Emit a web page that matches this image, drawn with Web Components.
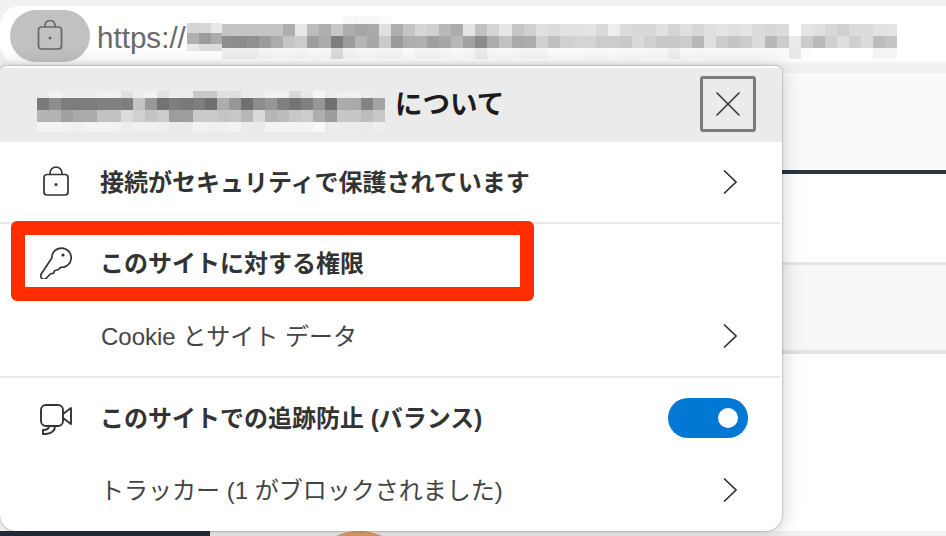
<!DOCTYPE html>
<html lang="ja">
<head>
<meta charset="utf-8">
<title>サイト情報</title>
<style>
  html, body { margin: 0; padding: 0; background: #fff; }
  body { width: 946px; height: 536px; overflow: hidden; font-family: "Liberation Sans", "Noto Sans CJK JP", sans-serif; }
</style>
</head>
<body>
<browser-frame>
  <address-bar></address-bar>
  <page-backdrop></page-backdrop>
  <info-panel>
    <panel-header slot="header">について</panel-header>

    <info-row strong style="--row-h: 80px">
      <svg slot="icon" width="32" height="32" viewBox="0 0 32 32" fill="none" stroke="#333" stroke-width="1.7">
        <rect x="4" y="8.5" width="24" height="20.5" rx="3"/>
        <path d="M10 8.5V7a6 6 0 0 1 12 0v1.5"/>
        <circle cx="16" cy="18.5" r="1.5" fill="#333" stroke="none"/>
      </svg>
      接続がセキュリティで保護されています
      <row-chevron slot="end"></row-chevron>
    </info-row>
    <row-divider></row-divider>

    <info-row strong style="--row-h: 78px">
      <svg slot="icon" width="32" height="32" viewBox="0 -1 32 32" fill="none" stroke="#333" stroke-width="1.7" stroke-linejoin="round">
        <path d="M11.8 10A9.7 9.7 0 1 1 20.5 19.4L18.5 21.5L14.5 22.7L13.5 25.3L11 25.5L5.5 30.8Q3.5 32 1.8 30.4Q0 28.6 1.2 26Z"/>
        <circle cx="23" cy="7" r="1.6" fill="#333" stroke="none"/>
      </svg>
      このサイトに対する権限
    </info-row>
    <info-row style="--row-h: 68px; --row-pad: 6px; --text-indent: 1px">
      Cookie とサイト データ
      <row-chevron slot="end"></row-chevron>
    </info-row>
    <row-divider></row-divider>

    <info-row strong style="--row-h: 80px">
      <svg slot="icon" width="32" height="36" viewBox="0 0 32 36" fill="none" stroke="#333" stroke-width="1.9" stroke-linejoin="round">
        <rect x="1" y="5" width="22" height="21" rx="5"/>
        <path d="M23 14L31 8V24L23 18"/>
        <path d="M9 26Q9 30 3 30V34H6Q15 33 15 26"/>
      </svg>
      このサイトでの追跡防止 (バランス)
      <toggle-switch slot="end"></toggle-switch>
    </info-row>
    <info-row style="--row-h: 64px">
      トラッカー (1 がブロックされました)
      <row-chevron slot="end"></row-chevron>
    </info-row>

    <red-outline slot="overlay"></red-outline>
  </info-panel>
</browser-frame>

<script>
// small helper: every element gets an open shadow root from a html string
class ShadowElement extends HTMLElement {
  constructor(html) {
    super();
    this.attachShadow({ mode: "open" }).innerHTML = html;
  }
}

class BrowserFrame extends ShadowElement {
  constructor() {
    super(`
      <style>
        :host { display: flex; flex-direction: column; position: relative; width: 946px; height: 536px; overflow: hidden; background: #fff; }
      </style>
      <slot></slot>
    `);
  }
}

// blurred-out pixels, rows of two digit grey values
class MosaicStrip extends HTMLElement {
  constructor() {
    super();
    this.attachShadow({ mode: "open" });
  }
  connectedCallback() {
    const cell = this.getAttribute("cell");
    const heights = this.getAttribute("heights").split(" ");
    const rows = this.getAttribute("rows").trim().split("/").map((r) => r.trim().split(/\s+/));
    const cols = Math.max(...rows.map((r) => r.length));
    let cells = "";
    rows.forEach((row) => {
      for (let i = 0; i < cols; i++) {
        const g = row[i];
        cells += g && g !== "--" ? `<i style="background:#${g}${g}${g}"></i>` : "<i></i>";
      }
    });
    this.shadowRoot.innerHTML = `
      <style>
        :host { display: grid; flex: none; filter: blur(.5px);
          grid-template-columns: repeat(${cols}, ${cell}px);
          grid-template-rows: ${heights.map((h) => h + "px").join(" ")}; }
        i { display: block; }
      </style>
      ${cells}
    `;
  }
}

class AddressBar extends ShadowElement {
  constructor() {
    super(`
      <style>
        :host { display: block; flex: none; height: 66px; background: #f1f1f1; }
        .bar { display: flex; height: 58px; margin-top: 6px; background: linear-gradient(#fff 92%, #f2f2f2); border-radius: 20px 0 0 20px; }
        .lock { flex: none; display: flex; align-items: center; justify-content: center; width: 80px; height: 52px; margin: 4px 0 0 10px; background: #c1c1c1; border-radius: 26px; }
        .scheme { flex: none; width: 90px; margin-left: 7px; line-height: 63px; font-size: 29.6px; color: #6a6a6a; white-space: nowrap; }
        .first { margin-top: 17px; }
        .rest { margin-top: 10px; }
      </style>
      <div class="bar">
        <div class="lock">
          <svg width="26" height="32" viewBox="0 0 26 32" fill="none" stroke="#666" stroke-width="1.7">
            <rect x="1.5" y="7" width="23" height="22" rx="3"/>
            <path d="M8 7V5.5a5 5 0 0 1 10 0V7"/>
            <circle cx="13" cy="18" r="1.5" fill="#666" stroke="none"/>
          </svg>
        </div>
        <div class="scheme">https://</div>
        <mosaic-strip class="first" cell="11.8" heights="10 11 7" rows="
          d4 d8 e8 / b0 9c ac / e8 dc dc"></mosaic-strip>
        <mosaic-strip class="rest" cell="12.05" heights="8 12 12 11" rows="
          -- -- -- -- -- -- -- -- -- -- f8 f6 f6 fb /
          c4 c4 c4 c4 c4 ae e8 bc ae c8 ac a6 aa e0 ae c4 d6 d0 b8 ac e4 c2 d4 e6 c6 d0 e0 dc e2 e2 e4 da ee dc d8 d8 e0 d4 e0 d8 e0 e4 e0 e4 dc d8 dc ff e4 e0 d8 d0 dc dc e2 e4 /
          8e 8c 90 9c ac c4 cc 9e ab 7e 9c b6 a8 ca 9a ae b0 a0 a8 b8 a2 8c ac c2 aa ac d0 c0 d0 d4 d4 cc cc c8 da d0 c8 c8 cc b8 e0 cc c4 cc dc b8 cc ea cc ba d0 de d0 dc bc c4 /
          f0 f0 f0 f6 f8 f8 f6 fa f8 dc f4 f8 f8 f6 f6 fc f6 f6 f8 fc f8 ec f8 fa f8 f6 f6 fc fc fc fa fa fc fa fa f8 f8 f0 fa f8 fa fa fa fa fa fa fa e8 fc ff ff ff ff ff f4 f4"></mosaic-strip>
      </div>
    `);
  }
}

// page content that shows behind the popup
class PageBackdrop extends ShadowElement {
  constructor() {
    super(`
      <style>
        :host { display: flex; flex-direction: column; flex: 1; background: #fff; }
        .top { height: 7px; background: #f0f0f0; }
        .soft { height: 97px; background: #fafafa; }
        .rule { height: 4px; background: #2b3441; }
        .blank { height: 88px; }
        .line { height: 3px; background: #e6e6e6; }
        .band { height: 85px; background: #f6f7f7; }
        .line2 { height: 4px; background: #e2e2e2; }
        .rest { flex: 1; }
        .foot { display: flex; height: 5px; background: #f2f2f2; overflow: hidden; }
        .dark { width: 210px; background: #232f3e; }
        .face { width: 62px; height: 30px; margin-left: 118px; background: #e0a070; border-radius: 50%; }
      </style>
      <div class="top"></div>
      <div class="soft"></div>
      <div class="rule"></div>
      <div class="blank"></div>
      <div class="line"></div>
      <div class="band"></div>
      <div class="line2"></div>
      <div class="rest"></div>
      <div class="foot"><div class="dark"></div><div class="face"></div></div>
    `);
  }
}

class InfoPanel extends ShadowElement {
  constructor() {
    super(`
      <style>
        :host { display: block; position: absolute; left: 0; top: 66px; width: 782px; height: 465px; box-sizing: border-box; padding-top: 2px; background: #fff; border-radius: 6px 6px 16px 16px; box-shadow: 0 0 2px rgba(0,0,0,.45), 0 2px 22px rgba(0,0,0,.2); overflow: hidden; }
      </style>
      <slot name="header"></slot>
      <slot></slot>
      <slot name="overlay"></slot>
    `);
  }
}

class PanelHeader extends ShadowElement {
  constructor() {
    super(`
      <style>
        :host { display: flex; height: 74px; background: #ebebeb; }
        mosaic-strip { margin: 23px 0 0 37px; align-self: flex-start; }
        .title { margin-left: 10px; line-height: 73px; font-size: 27.5px; font-weight: 700; color: #1c1c1c; white-space: nowrap; }
        .close { display: flex; align-items: center; justify-content: center; box-sizing: border-box; width: 56px; height: 56px; margin: 8px 26px 0 auto; border: 3px solid #7a7a7a; border-radius: 3px; }
      </style>
      <mosaic-strip cell="12" heights="7 12 12 10" rows="
        eb f2 ed ed ed ef f1 e0 ec f2 e2 ec ec c8 c8 e0 de ea ea f0 f0 d8 e8 f6 ec f0 f0 ec eb /
        7a 8e 7c 7c 7c 80 80 7e c4 98 74 7e 78 7e 70 ae 98 70 8c 96 80 74 80 96 70 ac aa 84 a4 /
        b4 b4 a0 aa aa c2 c2 dc d0 c4 cc 9c 9e ca ca c4 c8 b8 da b6 bc c8 cc ae 9c c6 c6 bc c8 /
        f4 f4 f2 f0 f4 f4 f2 ee f0 f0 ee ea ea f2 f0 f0 f4 ec ea f4 f4 f4 f4 f8 ec ec ec ea ee"></mosaic-strip>
      <div class="title"><slot></slot></div>
      <div class="close">
        <svg width="24" height="24" viewBox="0 0 24 24" stroke="#333" stroke-width="1.5"><path d="M0.5 0.5L23.5 23.5M23.5 0.5L0.5 23.5"/></svg>
      </div>
    `);
  }
}

class InfoRow extends ShadowElement {
  constructor() {
    super(`
      <style>
        :host { display: flex; align-items: center; height: var(--row-h, 76px); padding-bottom: var(--row-pad, 0); font-size: 24px; color: #444; white-space: nowrap; }
        :host([strong]) { font-weight: 700; color: #333; }
        .icon { flex: none; display: flex; align-items: center; width: 60px; padding-left: 40px; }
        .text { flex: 1; padding: 0 0 4px var(--text-indent, 0); }
        .end { flex: none; display: flex; justify-content: flex-end; padding-right: 34px; }
      </style>
      <div class="icon"><slot name="icon"></slot></div>
      <div class="text"><slot></slot></div>
      <div class="end"><slot name="end"></slot></div>
    `);
  }
}

class RowDivider extends ShadowElement {
  constructor() {
    super(`<style>:host { display: block; width: 780px; height: 2px; background: #e8e8e8; }</style>`);
  }
}

class RowChevron extends ShadowElement {
  constructor() {
    super(`
      <style>:host { display: block; margin-right: 11px; height: 24px; } svg { display: block; }</style>
      <svg width="14" height="24" viewBox="0 0 14 24" fill="none" stroke="#333" stroke-width="1.6"><path d="M1 0.5L13 12L1 23.5"/></svg>
    `);
  }
}

class ToggleSwitch extends ShadowElement {
  constructor() {
    super(`
      <style>
        :host { display: flex; align-items: center; justify-content: flex-end; box-sizing: border-box; width: 80px; height: 40px; padding-right: 10px; background: #0078d4; border-radius: 20px; }
        .knob { width: 20px; height: 20px; background: #fff; border-radius: 50%; }
      </style>
      <div class="knob"></div>
    `);
  }
}

// annotation drawn over the screenshot
class RedOutline extends ShadowElement {
  constructor() {
    super(`<style>:host { display: block; position: absolute; left: 11px; top: 155px; width: 523px; height: 80px; box-sizing: border-box; border: 14px solid #ff2d00; border-radius: 6px; }</style>`);
  }
}

customElements.define("browser-frame", BrowserFrame);
customElements.define("mosaic-strip", MosaicStrip);
customElements.define("address-bar", AddressBar);
customElements.define("page-backdrop", PageBackdrop);
customElements.define("info-panel", InfoPanel);
customElements.define("panel-header", PanelHeader);
customElements.define("info-row", InfoRow);
customElements.define("row-divider", RowDivider);
customElements.define("row-chevron", RowChevron);
customElements.define("toggle-switch", ToggleSwitch);
customElements.define("red-outline", RedOutline);
</script>
</body>
</html>
